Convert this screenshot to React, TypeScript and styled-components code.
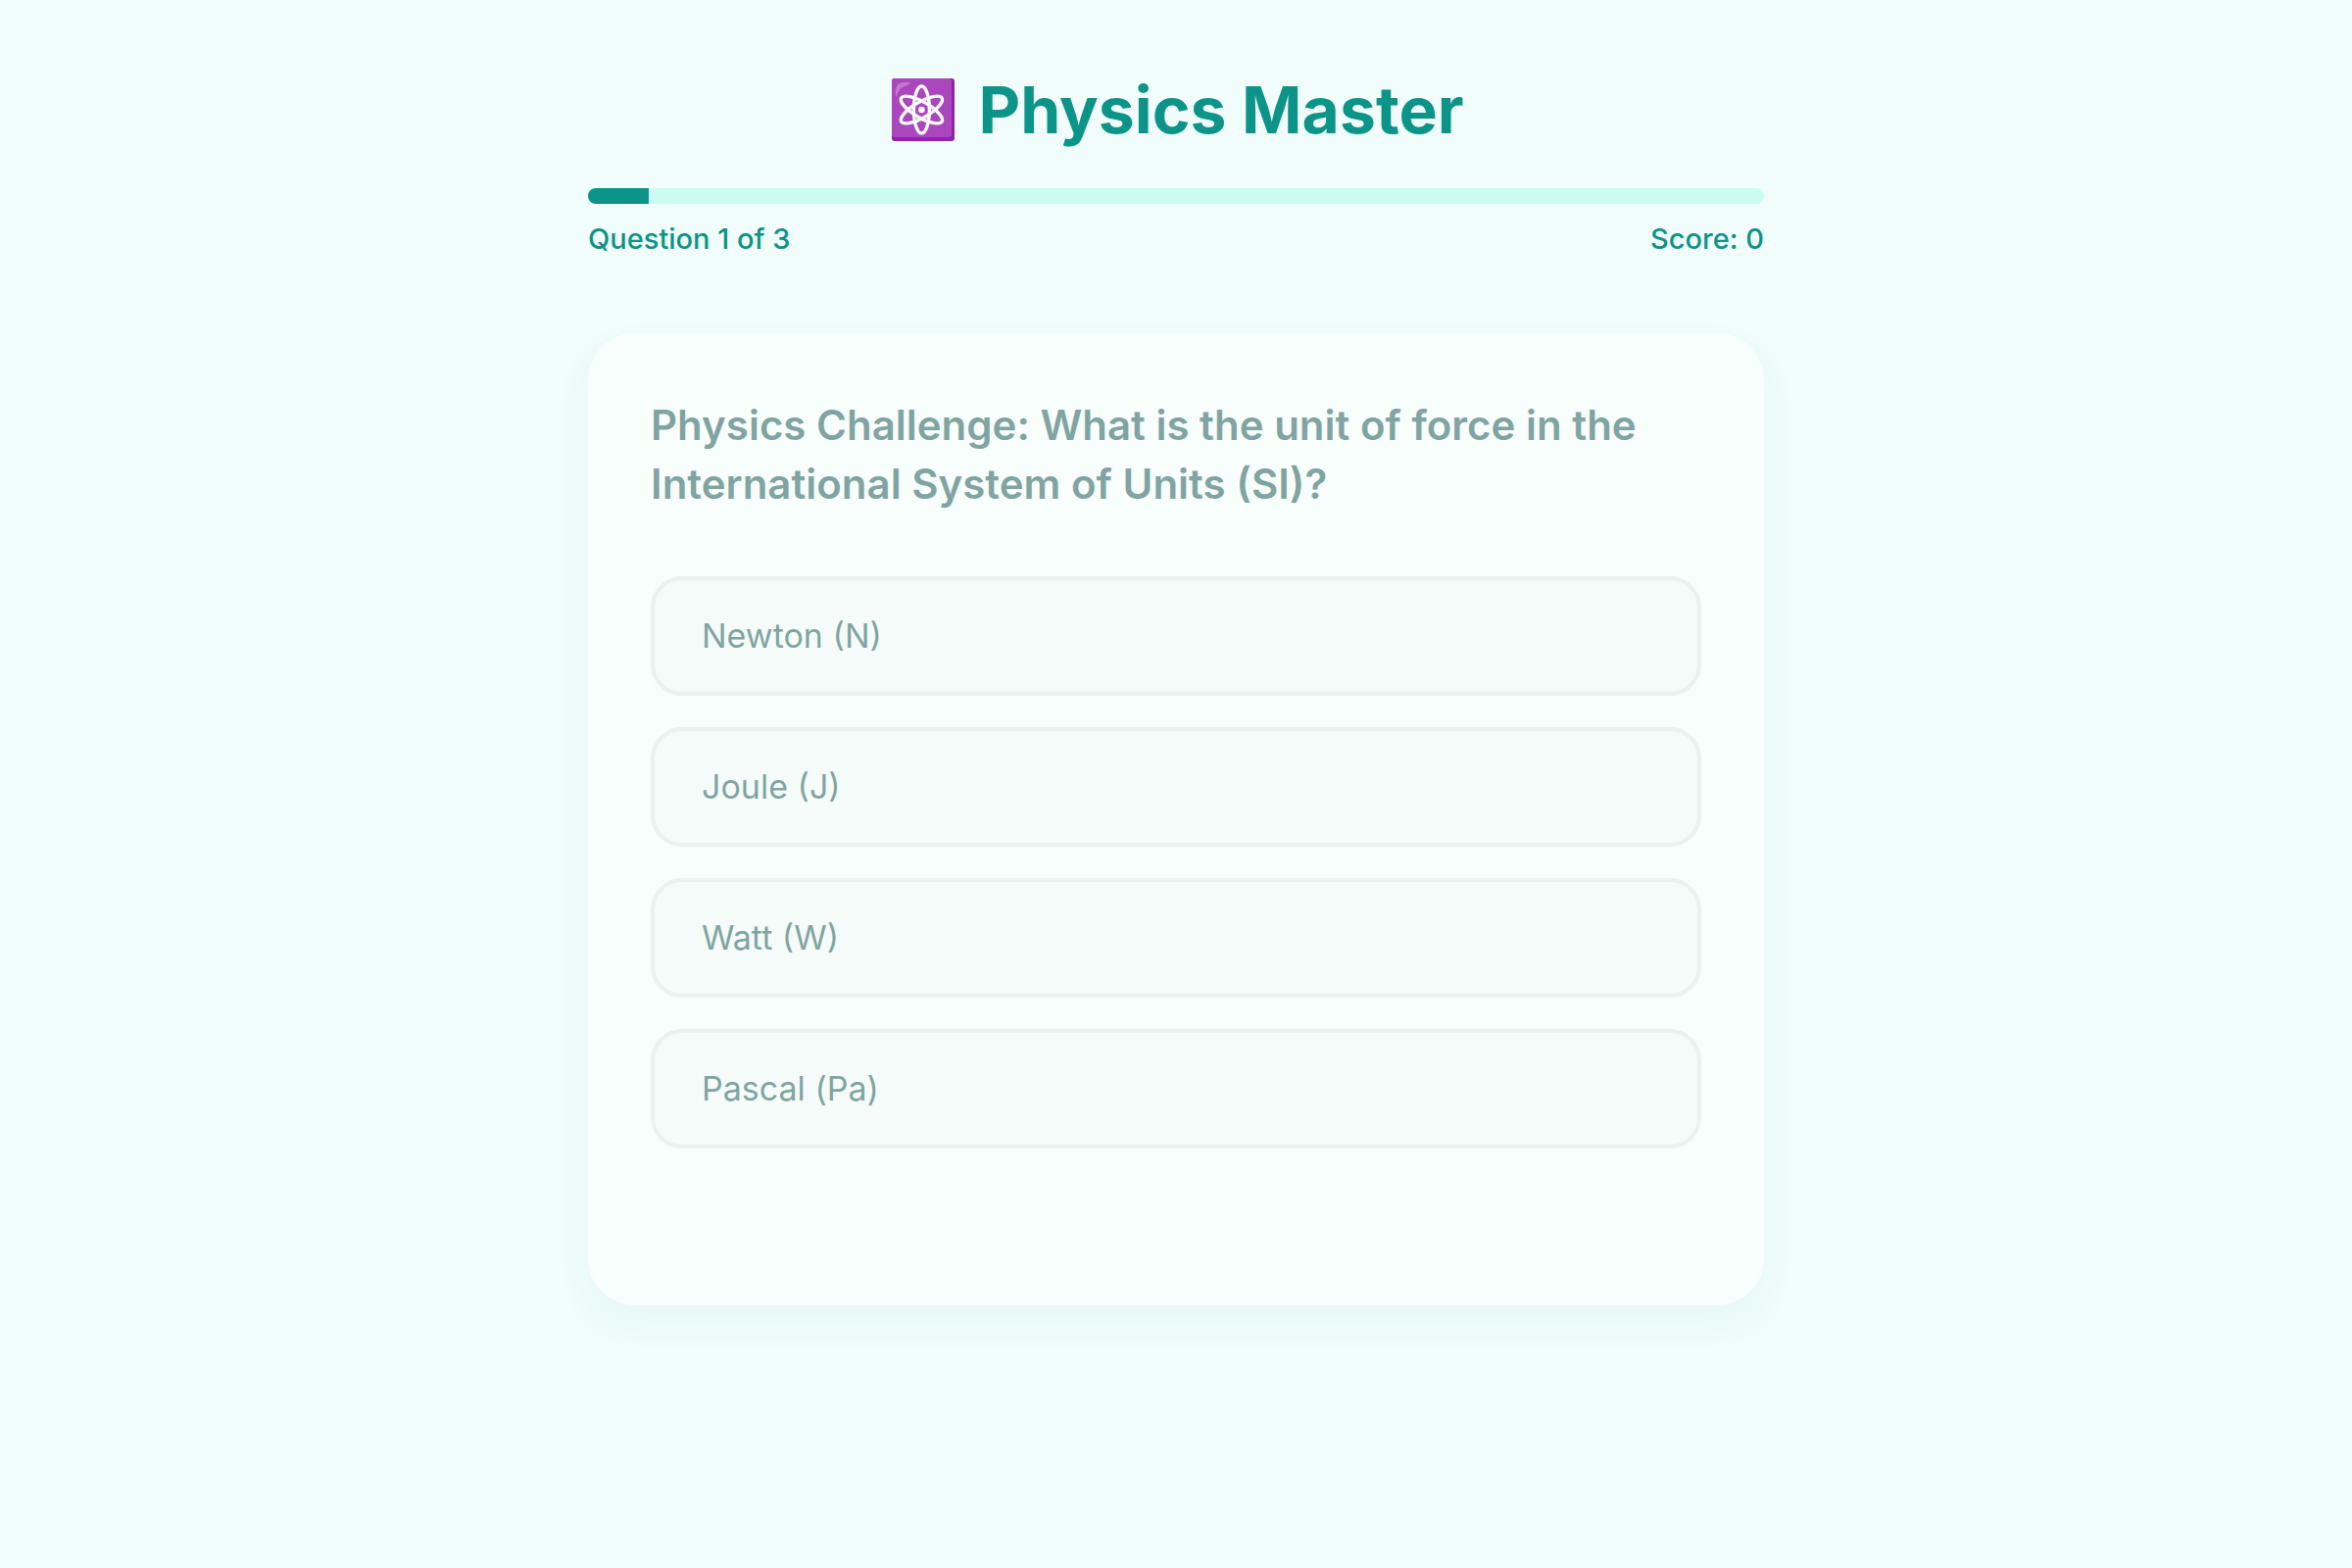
import React, { useState } from "react";
import styled, { createGlobalStyle } from "styled-components";

const GlobalStyle = createGlobalStyle`
  *, *::before, *::after { box-sizing: border-box; }
  body {
    margin: 0;
    background: #f0fdfa;
    color: #134e4a;
    font-family: Inter, "Noto Sans", sans-serif;
  }
`;

const Page = styled.main`
  max-width: 1200px;
  margin: 0 auto;
  padding: 64px 0;
`;

const Title = styled.h1`
  display: flex;
  align-items: center;
  justify-content: center;
  gap: 24px;
  margin: 0 0 32px;
  color: #0d9488;
  font-size: 66px;
  font-weight: 700;
  line-height: 96px;
`;

const AtomSvg = styled.svg`
  width: 68px;
  height: 64px;
  flex: none;
`;

const Track = styled.div`
  height: 16px;
  margin-bottom: 16px;
  overflow: hidden;
  border-radius: 8px;
  background: #ccfbf1;
`;

const Fill = styled.div`
  height: 100%;
  background: #0d9488;
`;

const Status = styled.div`
  display: flex;
  justify-content: space-between;
  margin-bottom: 76px;
  color: #0d9488;
  font-size: 29px;
  font-weight: 500;
  line-height: 40px;
`;

const Card = styled.section`
  padding: 64px 64px 160px;
  border-radius: 48px;
  background: #ffffff;
  box-shadow: 0 16px 32px rgba(13, 148, 136, 0.08);
  opacity: 0.5;
`;

const Question = styled.h2`
  margin: 0 0 64px;
  font-size: 42px;
  font-weight: 600;
  line-height: 60px;
`;

const Options = styled.div`
  display: grid;
  gap: 32px;
`;

const Option = styled.button`
  padding: 32px 48px;
  border: 4px solid #e5e8e8;
  border-radius: 32px;
  background: #f8fbf9;
  color: inherit;
  font-family: inherit;
  font-size: 34px;
  line-height: 50px;
  text-align: left;
  cursor: pointer;
`;

const AtomIcon = () => (
  <AtomSvg viewBox="-4 0 68 64" aria-hidden="true">
    <rect width="64" height="64" rx="3" fill="#8e24aa" />
    <rect width="61" height="60" rx="3" fill="#ab47bc" />
    <path d="M4 18C3 9 5 4 13 4C19 3 20 5 16 7C9 9 7 12 6 16C5 19 4 20 4 18Z" fill="#c176cf" />
    <g fill="none" stroke="#fafafa" strokeWidth="3.4">
      <ellipse cx="30.4" cy="32" rx="8" ry="24" />
      <ellipse cx="30.4" cy="32" rx="8" ry="24" transform="rotate(60 30.4 32)" />
      <ellipse cx="30.4" cy="32" rx="8" ry="24" transform="rotate(-60 30.4 32)" />
    </g>
    <circle cx="30.4" cy="32" r="3.3" fill="#fafafa" />
  </AtomSvg>
);

const options = ["Newton (N)", "Joule (J)", "Watt (W)", "Pascal (Pa)"];
const answer = "Newton (N)";
const progress = 5.2;

export default function App() {
  const [picked, setPicked] = useState<string | null>(null);
  return (
    <>
      <GlobalStyle />
      <Page>
        <header>
          <Title>
            <AtomIcon />
            Physics Master
          </Title>
          <Track role="progressbar" aria-label="Quiz progress" aria-valuenow={progress}>
            <Fill style={{ width: `${progress}%` }} />
          </Track>
          <Status>
            <span>Question 1 of 3</span>
            <span>Score: {picked === answer ? 1 : 0}</span>
          </Status>
        </header>
        <Card>
          <Question>
            Physics Challenge: What is the unit of force in the International System of Units (SI)?
          </Question>
          <Options>
            {options.map((option) => (
              <Option key={option} type="button" onClick={() => setPicked(option)}>
                {option}
              </Option>
            ))}
          </Options>
        </Card>
      </Page>
    </>
  );
}
